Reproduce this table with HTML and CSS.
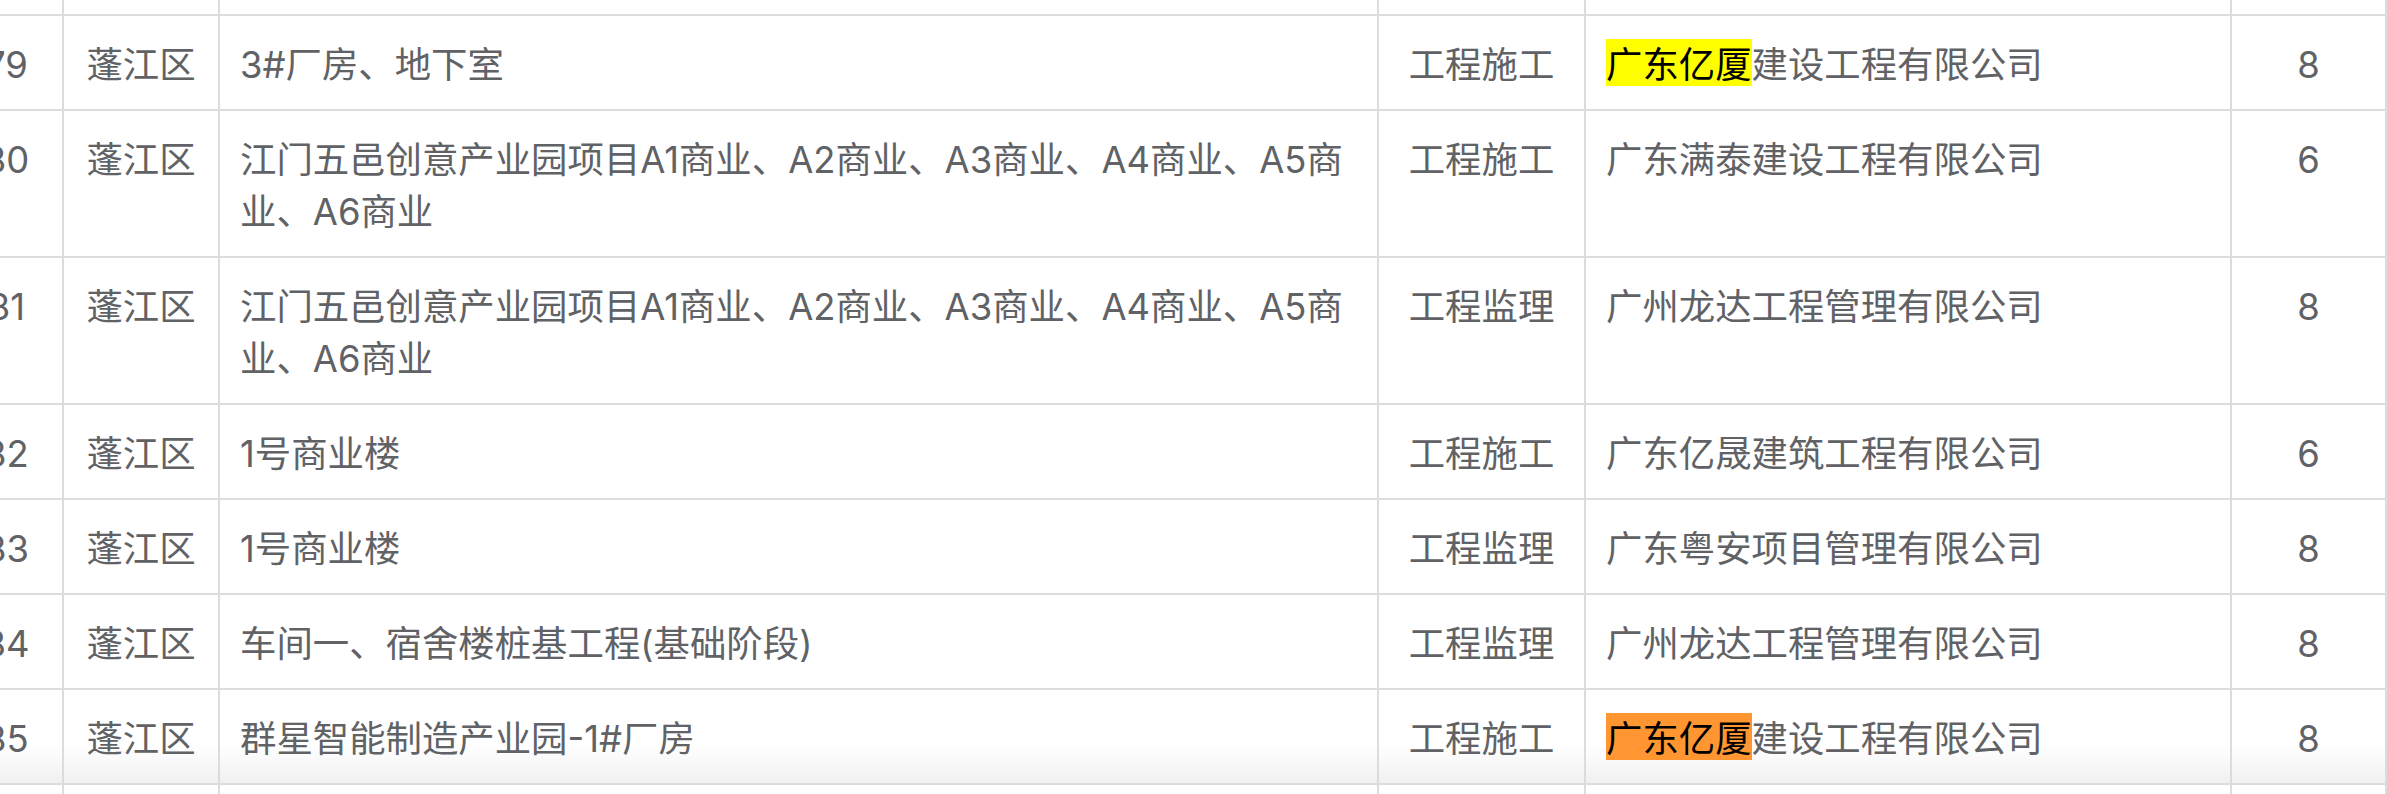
FILE: index.html
```html
<!DOCTYPE html>
<html lang="zh-CN">
<head>
<meta charset="utf-8">
<title>项目列表</title>
<link rel="stylesheet" href="styles.css">
</head>
<body>
<div class="table">
  <div class="row spacer">
    <div class="cell"></div><div class="cell"></div><div class="cell"></div><div class="cell"></div><div class="cell"></div><div class="cell"></div>
  </div>
  <div class="row">
    <div class="cell c">179</div>
    <div class="cell c">蓬江区</div>
    <div class="cell">3#厂房、地下室</div>
    <div class="cell c">工程施工</div>
    <div class="cell"><span class="hl">广东亿厦</span>建设工程有限公司</div>
    <div class="cell c">8</div>
  </div>
  <div class="row">
    <div class="cell c">180</div>
    <div class="cell c">蓬江区</div>
    <div class="cell">江门五邑创意产业园项目A1商业、A2商业、A3商业、A4商业、A5商业、A6商业</div>
    <div class="cell c">工程施工</div>
    <div class="cell">广东满泰建设工程有限公司</div>
    <div class="cell c">6</div>
  </div>
  <div class="row">
    <div class="cell c">181</div>
    <div class="cell c">蓬江区</div>
    <div class="cell">江门五邑创意产业园项目A1商业、A2商业、A3商业、A4商业、A5商业、A6商业</div>
    <div class="cell c">工程监理</div>
    <div class="cell">广州龙达工程管理有限公司</div>
    <div class="cell c">8</div>
  </div>
  <div class="row">
    <div class="cell c">182</div>
    <div class="cell c">蓬江区</div>
    <div class="cell">1号商业楼</div>
    <div class="cell c">工程施工</div>
    <div class="cell">广东亿晟建筑工程有限公司</div>
    <div class="cell c">6</div>
  </div>
  <div class="row">
    <div class="cell c">183</div>
    <div class="cell c">蓬江区</div>
    <div class="cell">1号商业楼</div>
    <div class="cell c">工程监理</div>
    <div class="cell">广东粤安项目管理有限公司</div>
    <div class="cell c">8</div>
  </div>
  <div class="row">
    <div class="cell c">184</div>
    <div class="cell c">蓬江区</div>
    <div class="cell">车间一、宿舍楼桩基工程(基础阶段)</div>
    <div class="cell c">工程监理</div>
    <div class="cell">广州龙达工程管理有限公司</div>
    <div class="cell c">8</div>
  </div>
  <div class="row last">
    <div class="cell c">185</div>
    <div class="cell c">蓬江区</div>
    <div class="cell">群星智能制造产业园-1#厂房</div>
    <div class="cell c">工程施工</div>
    <div class="cell"><span class="hl cur">广东亿厦</span>建设工程有限公司</div>
    <div class="cell c">8</div>
  </div>
  <div class="row tail">
    <div class="cell"></div><div class="cell"></div><div class="cell"></div><div class="cell"></div><div class="cell"></div><div class="cell"></div>
  </div>
</div>
</body>
</html>
```

FILE: styles.css
```css
html, body {
  margin: 0;
  padding: 0;
  overflow: hidden;
  background: #ffffff;
}

body {
  font-family: Inter, "Noto Sans CJK SC", "Noto Sans", sans-serif;
  font-size: 36.4px;
  color: #606266;
}

.table {
  margin-left: -64px;
  width: 2451px;
}

.row {
  display: grid;
  grid-template-columns: 128px 156px 1159px 207px 646px 155px;
  border-bottom: 2px solid #dcdcdc;
}

.cell {
  box-sizing: border-box;
  border-right: 2px solid #dcdcdc;
  padding: 22.6px 20px 18.4px;
  line-height: 52px;
  min-width: 0;
}

.cell.c {
  text-align: center;
}

.spacer .cell {
  padding: 0;
  height: 14px;
}

.tail .cell {
  padding: 0;
  height: 40px;
}

.last .cell {
  background: linear-gradient(to bottom, #ffffff 0%, #ffffff 58%, #f1f1f1 100%);
}

.hl {
  display: inline-block;
  height: 47px;
  line-height: 52px;
  color: #000000;
  background: #ffff00;
}

.hl.cur {
  background: #ff9632;
}
```
